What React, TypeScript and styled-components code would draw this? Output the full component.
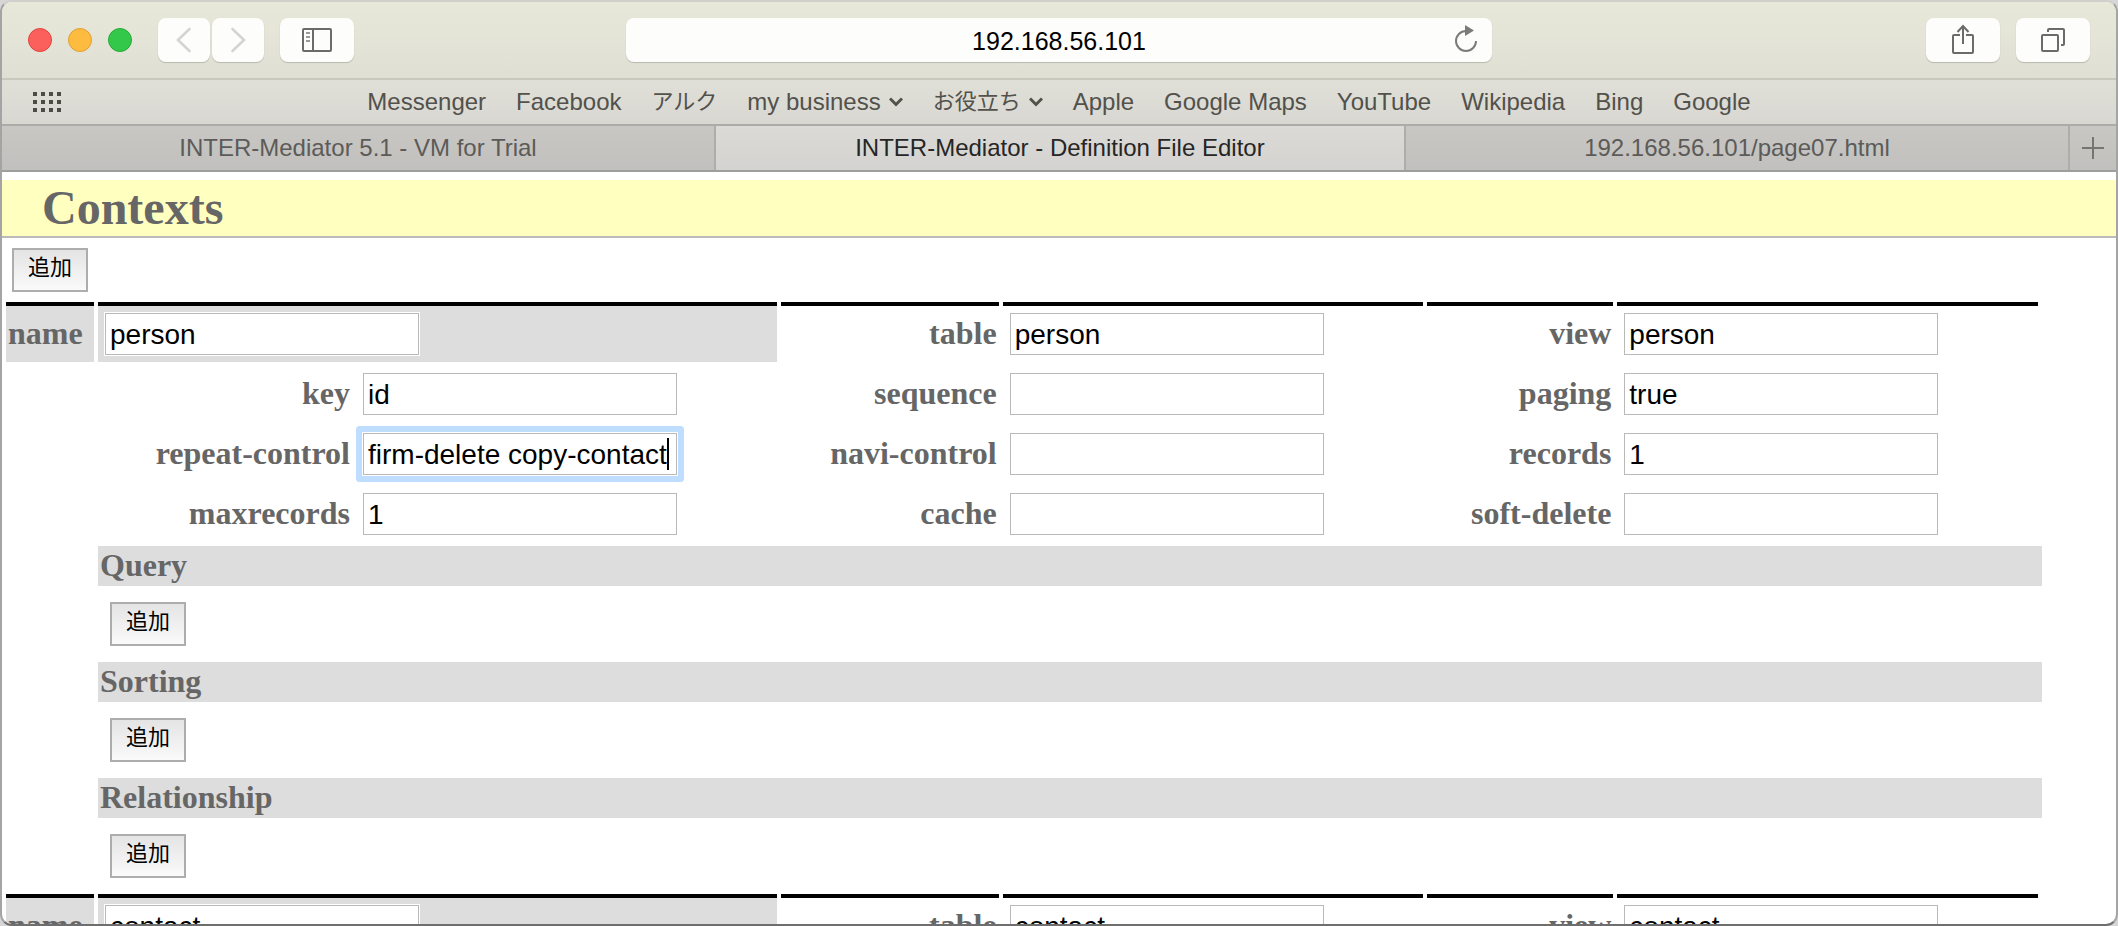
import React, { useState } from 'react';
import styled, { createGlobalStyle, css } from 'styled-components';

const sans = `"Liberation Sans", "Noto Sans CJK JP", sans-serif`;
const serif = `"Liberation Serif", "Noto Sans CJK JP", serif`;

const GlobalStyle = createGlobalStyle`
  *, *::before, *::after { box-sizing: border-box; }
  body { margin: 0; background: #d6d6d6; }
`;

const Window = styled.div`
  display: flex;
  flex-direction: column;
  height: 100vh;
  border: 2px solid #a4a4a4;
  border-top-color: #cfcfcc;
  border-bottom-color: #6e6e6e;
  border-radius: 12px;
  overflow: hidden;
  background: #fff;
  font-family: ${sans};
`;

const Toolbar = styled.header`
  display: grid;
  grid-template-columns: 1fr 42% 1fr;
  align-items: center;
  flex: none;
  height: 78px;
  padding: 0 26px;
  border-bottom: 2px solid #c9c8bd;
  background: linear-gradient(#e8e8d9, #dfdfd5);
`;

const ToolGroup = styled.div<{ $end?: boolean }>`
  display: flex;
  align-items: center;
  gap: 16px;
  justify-content: ${(p) => (p.$end ? 'flex-end' : 'flex-start')};
`;

const Lights = styled.div`
  display: flex;
  gap: 16px;
  padding-right: 10px;
`;

const Light = styled.button<{ $fill: string; $edge: string }>`
  width: 24px;
  height: 24px;
  padding: 0;
  border: 1px solid ${(p) => p.$edge};
  border-radius: 50%;
  background: ${(p) => p.$fill};
`;

const NavPair = styled.div`
  display: flex;
  gap: 2px;
`;

const ToolButton = styled.button<{ $narrow?: boolean }>`
  display: grid;
  place-items: center;
  width: ${(p) => (p.$narrow ? 52 : 74)}px;
  height: 44px;
  padding: 0;
  border: 0;
  border-radius: 8px;
  background: #fdfdfb;
  box-shadow: 0 1px 1px #b9b9ae;
`;

const AddressBar = styled.div`
  display: grid;
  grid-template-columns: 52px 1fr 52px;
  align-items: center;
  height: 44px;
  border-radius: 8px;
  background: #fdfdfb;
  box-shadow: 0 1px 1px #b9b9ae;
`;

const AddressInput = styled.input`
  grid-column: 2;
  min-width: 0;
  height: 44px;
  padding: 2px 0 0;
  border: 0;
  outline: 0;
  background: transparent;
  color: #000;
  font: 25px ${sans};
  text-align: center;
`;

const IconButton = styled.button`
  display: grid;
  place-items: center;
  padding: 0;
  border: 0;
  background: transparent;
`;

const Bookmarks = styled.nav`
  display: grid;
  grid-template-columns: 1fr auto 1fr;
  align-items: center;
  flex: none;
  height: 46px;
  padding: 0 30px;
  border-bottom: 2px solid #acaba8;
  background: linear-gradient(#e0dfd7, #d8d7d2);
`;

const BookmarkList = styled.div`
  display: flex;
  align-items: center;
  gap: 30px;
`;

const Bookmark = styled.a<{ $cjk?: boolean }>`
  display: flex;
  align-items: center;
  gap: 8px;
  color: #52514b;
  font-size: ${(p) => (p.$cjk ? 22 : 24)}px;
  line-height: 44px;
  white-space: nowrap;
  text-decoration: none;
`;

const TabBar = styled.div`
  display: flex;
  flex: none;
  height: 46px;
  border-bottom: 2px solid #9e9e9d;
  background: linear-gradient(#c8c7c3, #c1c0be);
`;

const Tab = styled.button<{ $active?: boolean; $grow: number }>`
  flex: ${(p) => p.$grow} 1 0;
  min-width: 0;
  padding: 0;
  border: 0;
  border-right: 2px solid #adadaa;
  background: ${(p) => (p.$active ? 'linear-gradient(#dbdad6, #d4d3d1)' : 'transparent')};
  color: ${(p) => (p.$active ? '#262626' : '#5c5b59')};
  font: 24px ${sans};
`;

const NewTab = styled.button`
  display: grid;
  place-items: center;
  width: 46px;
  padding: 0;
  border: 0;
  background: transparent;
`;

const Page = styled.main`
  flex: 1;
  min-height: 0;
  overflow: hidden;
  padding-top: 8px;
  color: #666;
  font-family: ${serif};
`;

const PageTitle = styled.h1`
  margin: 0;
  padding-left: 40px;
  border-bottom: 2px solid #bbb;
  background: #ffffc0;
  font-size: 48px;
  line-height: 56px;
`;

const AddRow = styled.div`
  padding: 10px;
`;

const AddButton = styled.button`
  display: block;
  width: 76px;
  height: 44px;
  padding: 0 0 10px;
  border: 2px solid #adadad;
  background: linear-gradient(#e4e4e4, #fafafa);
  color: #000;
  font: 22px "Noto Sans CJK JP", sans-serif;
  line-height: 30px;
`;

const ContextGrid = styled.form`
  display: grid;
  grid-template-columns: 88px 254px 1fr 218px 1fr 186px 1fr 0;
  gap: 4px;
  padding: 0 74px 4px 4px;
`;

const cell = css<{ $top?: boolean; $shaded?: boolean }>`
  display: flex;
  align-items: center;
  height: ${(p) => (p.$top ? 60 : 56)}px;
  border-top: ${(p) => (p.$top ? '4px solid #000' : '0')};
  background: ${(p) => (p.$shaded ? '#ddd' : 'transparent')};
`;

const LabelCell = styled.label<{ $top?: boolean; $shaded?: boolean; $col: number }>`
  ${cell}
  grid-column: ${(p) => p.$col};
  justify-content: ${(p) => (p.$shaded ? 'flex-start' : 'flex-end')};
  padding: 0 2px 2px;
  font-size: 32px;
  font-weight: bold;
  white-space: nowrap;
`;

const FieldCell = styled.div<{ $top?: boolean; $shaded?: boolean; $span?: boolean }>`
  ${cell}
  grid-column: span ${(p) => (p.$span ? 2 : 1)};
  padding: 0 6px;
`;

const FieldFrame = styled.div<{ $active: boolean }>`
  position: relative;
  padding: 1px;
  background: #fff;
  border-radius: ${(p) => (p.$active ? 1 : 0)}px;
  box-shadow: ${(p) => (p.$active ? '0 0 0 6px #bfdeff' : 'none')};
`;

const TextInput = styled.input`
  display: block;
  width: 314px;
  height: 42px;
  padding: 2px 4px 0;
  border: 1px solid #b9b9b9;
  border-radius: 0;
  outline: 0;
  background: #fff;
  color: #000;
  caret-color: transparent;
  font: 28px ${sans};
`;

const Caret = styled.span`
  position: absolute;
  top: 6px;
  right: 9px;
  width: 2px;
  height: 32px;
  background: #000;
`;

const SectionTitle = styled.h2`
  grid-column: 2 / -1;
  margin: 0;
  padding: 0 2px 2px;
  background: #ddd;
  font-size: 32px;
  line-height: 38px;
`;

const SectionBody = styled.div`
  grid-column: 2 / -1;
  padding: 12px;
`;

const ArrowIcon = ({ back }: { back?: boolean }) => (
  <svg width="16" height="26" viewBox="0 0 16 26" fill="none" stroke="#d4d4d2" strokeWidth="2.6" strokeLinecap="round">
    <path d={back ? 'M13.500 2 2 13l11.500 11' : 'M2.500 2 14 13 2.500 24'} />
  </svg>
);

const SidebarIcon = () => (
  <svg width="30" height="24" viewBox="0 0 30 24" fill="none" stroke="#6b6b6b" strokeWidth="2">
    <rect x="1" y="1" width="28" height="22" rx="1" />
    <path d="M11 1v22" />
    <path d="M4 5h4M4 9h4M4 13h4" stroke="#9a9a9a" />
  </svg>
);

const ReloadIcon = () => (
  <svg width="22" height="30" viewBox="0 0 22 30" fill="none" stroke="#7b7b7b" strokeWidth="2">
    <path d="M21 16a10 10 0 1 1-10-10" />
    <path d="M10 0 19 5.500 10 11z" fill="#7b7b7b" stroke="none" />
  </svg>
);

const ShareIcon = () => (
  <svg width="22" height="32" viewBox="0 0 22 32" fill="none" stroke="#6b6b6b" strokeWidth="2">
    <path d="M8 11H2a1 1 0 0 0-1 1v16a1 1 0 0 0 1 1h18a1 1 0 0 0 1-1V12a1 1 0 0 0-1-1h-6" />
    <path d="M11 20V2M5.500 8 11 2l5.500 6" />
  </svg>
);

const TabsIcon = () => (
  <svg width="24" height="24" viewBox="0 0 24 24" fill="none" stroke="#6b6b6b" strokeWidth="2">
    <rect x="1" y="7" width="16" height="16" rx="1" />
    <path d="M7 4V2a1 1 0 0 1 1-1h14a1 1 0 0 1 1 1v14a1 1 0 0 1-1 1h-2" />
  </svg>
);

const DotsIcon = () => (
  <svg width="30" height="22" viewBox="0 0 30 22" fill="#4c4b46">
    {[0, 8, 16].map((y) =>
      [0, 8, 16, 24].map((x) => <rect key={`${x}-${y}`} x={x + 1} y={y + 1} width="4" height="4" />),
    )}
  </svg>
);

const ChevronIcon = () => (
  <svg width="14" height="10" viewBox="0 0 14 10" fill="none" stroke="#52514b" strokeWidth="3">
    <path d="m1 1.500 6 6 6-6" />
  </svg>
);

const PlusIcon = () => (
  <svg width="22" height="22" viewBox="0 0 22 22" stroke="#757573" strokeWidth="2">
    <path d="M11 0v22M0 11h22" />
  </svg>
);

const bookmarks: { label: string; cjk?: boolean; menu?: boolean }[] = [
  { label: 'Messenger' },
  { label: 'Facebook' },
  { label: 'アルク', cjk: true },
  { label: 'my business', menu: true },
  { label: 'お役立ち', cjk: true, menu: true },
  { label: 'Apple' },
  { label: 'Google Maps' },
  { label: 'YouTube' },
  { label: 'Wikipedia' },
  { label: 'Bing' },
  { label: 'Google' },
];

type FieldDef = [label: string, value: string];

interface ContextDef {
  id: string;
  rows: FieldDef[][];
}

const fieldRows = (name: string): FieldDef[][] => [
  [['name', name], ['table', name], ['view', name]],
  [['key', 'id'], ['sequence', ''], ['paging', 'true']],
  [['repeat-control', 'firm-delete copy-contact'], ['navi-control', ''], ['records', '1']],
  [['maxrecords', '1'], ['cache', ''], ['soft-delete', '']],
];

const contexts: ContextDef[] = [
  { id: 'person', rows: fieldRows('person') },
  { id: 'contact', rows: fieldRows('contact').slice(0, 1) },
];

const sections = ['Query', 'Sorting', 'Relationship'];

interface ContextFormProps {
  context: ContextDef;
  active: string;
  onActivate: (id: string) => void;
}

const ContextForm = ({ context, active, onActivate }: ContextFormProps) => (
  <ContextGrid>
    {context.rows.map((row, r) =>
      row.map(([label, value], c) => {
        const id = `${context.id}-${label}`;
        const top = r === 0;
        const shaded = top && c === 0;
        const col = c === 0 ? (top ? 1 : 2) : c * 2 + 2;
        return (
          <React.Fragment key={id}>
            <LabelCell htmlFor={id} $top={top} $shaded={shaded} $col={col}>
              {label}
            </LabelCell>
            <FieldCell $top={top} $shaded={shaded} $span={shaded}>
              <FieldFrame $active={active === id}>
                <TextInput id={id} type="text" defaultValue={value} onFocus={() => onActivate(id)} />
                {active === id && <Caret />}
              </FieldFrame>
            </FieldCell>
          </React.Fragment>
        );
      }),
    )}
    {context.rows.length > 1 &&
      sections.map((title) => (
        <React.Fragment key={title}>
          <SectionTitle>{title}</SectionTitle>
          <SectionBody>
            <AddButton type="button">追加</AddButton>
          </SectionBody>
        </React.Fragment>
      ))}
  </ContextGrid>
);

export default function App() {
  const [active, setActive] = useState('person-repeat-control');

  return (
    <>
      <GlobalStyle />
      <Window>
        <Toolbar>
          <ToolGroup>
            <Lights>
              <Light aria-label="Close" $fill="#fc605c" $edge="#e0443f" />
              <Light aria-label="Minimize" $fill="#fdbc40" $edge="#dea034" />
              <Light aria-label="Zoom" $fill="#34c84a" $edge="#27aa35" />
            </Lights>
            <NavPair>
              <ToolButton aria-label="Back" $narrow><ArrowIcon back /></ToolButton>
              <ToolButton aria-label="Forward" $narrow><ArrowIcon /></ToolButton>
            </NavPair>
            <ToolButton aria-label="Sidebar"><SidebarIcon /></ToolButton>
          </ToolGroup>
          <AddressBar>
            <AddressInput aria-label="Address" type="text" defaultValue="192.168.56.101" />
            <IconButton aria-label="Reload"><ReloadIcon /></IconButton>
          </AddressBar>
          <ToolGroup $end>
            <ToolButton aria-label="Share"><ShareIcon /></ToolButton>
            <ToolButton aria-label="Show all tabs"><TabsIcon /></ToolButton>
          </ToolGroup>
        </Toolbar>
        <Bookmarks>
          <ToolGroup>
            <IconButton aria-label="Top sites"><DotsIcon /></IconButton>
          </ToolGroup>
          <BookmarkList>
            {bookmarks.map(({ label, cjk, menu }) => (
              <Bookmark key={label} href="#" $cjk={cjk}>
                {label}
                {menu && <ChevronIcon />}
              </Bookmark>
            ))}
          </BookmarkList>
        </Bookmarks>
        <TabBar>
          <Tab $grow={714}>INTER-Mediator 5.1 - VM for Trial</Tab>
          <Tab $grow={690} $active>INTER-Mediator - Definition File Editor</Tab>
          <Tab $grow={664}>192.168.56.101/page07.html</Tab>
          <NewTab aria-label="New tab"><PlusIcon /></NewTab>
        </TabBar>
        <Page>
          <PageTitle>Contexts</PageTitle>
          <AddRow>
            <AddButton type="button">追加</AddButton>
          </AddRow>
          {contexts.map((context) => (
            <ContextForm key={context.id} context={context} active={active} onActivate={setActive} />
          ))}
        </Page>
      </Window>
    </>
  );
}
